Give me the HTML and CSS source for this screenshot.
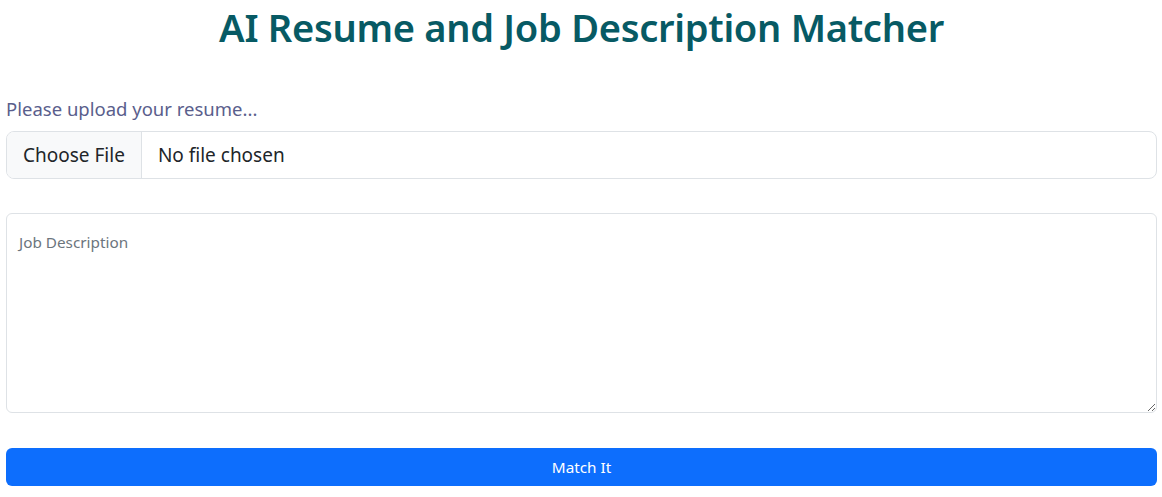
FILE: index.html
```html
<!DOCTYPE html>
<html lang="en">
<head>
<meta charset="utf-8">
<title>AI Resume and Job Description Matcher</title>
<link rel="stylesheet" href="styles.css">
</head>
<body>
<main class="page">
  <h1 class="title">AI Resume and Job Description Matcher</h1>
  <form class="form">
    <div class="field">
      <label class="label" for="resume">Please upload your resume...</label>
      <div class="file-input">
        <span class="file-btn">Choose File</span>
        <span class="file-name">No file chosen</span>
      </div>
    </div>
    <textarea class="textarea" placeholder="Job Description"></textarea>
    <button type="button" class="btn">Match It</button>
  </form>
</main>
</body>
</html>
```
FILE: styles.css
```css
* { box-sizing: border-box; }
html, body { margin: 0; padding: 0; background: #fff; }
body {
  font-family: "Noto Sans", "Open Sans", sans-serif;
  color: #212529;
}
.page {
  padding: 0 5px 0 6px;
}
.title {
  margin: 0;
  padding-top: 3px;
  text-align: center;
  font-size: 38.1px;
  font-weight: 600;
  line-height: 48px;
  color: #075a64;
  letter-spacing: -0.3px;
}
.form {
  display: flex;
  flex-direction: column;
  margin-top: 47px;
}
.field {
  display: flex;
  flex-direction: column;
  gap: 11px;
}
.label {
  font-size: 18.5px;
  line-height: 22px;
  color: #5a5e8c;
}
.file-input {
  display: flex;
  height: 48px;
  border: 1px solid #dee2e6;
  border-radius: 8px;
  overflow: hidden;
  font-size: 19px;
}
.file-btn {
  display: flex;
  align-items: center;
  padding: 0 16px;
  background: #f8f9fa;
  border-right: 1px solid #dee2e6;
  color: #212529;
}
.file-name {
  display: flex;
  align-items: center;
  padding: 0 16px;
  color: #212529;
}
.textarea {
  margin-top: 34px;
  height: 200px;
  border: 1px solid #dee2e6;
  border-radius: 6px;
  padding: 18px 12px;
  font-family: inherit;
  font-size: 15.3px;
  color: #212529;
  resize: vertical;
}
.textarea::placeholder { color: #6c757d; }
.btn {
  margin-top: 35px;
  height: 38px;
  border: none;
  border-radius: 6px;
  background: #0d6efd;
  color: #fff;
  font-family: inherit;
  font-size: 15.3px;
}
```
